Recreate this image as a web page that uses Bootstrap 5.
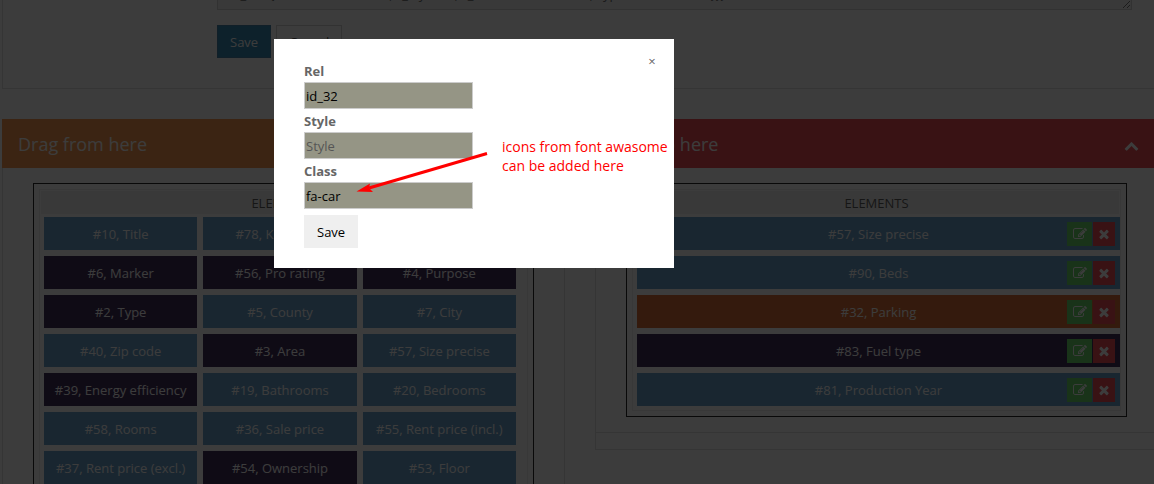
<!DOCTYPE html>
<html lang="en">
<head>
<meta charset="utf-8">
<meta name="viewport" content="width=device-width, initial-scale=1">
<title>Edit element</title>
<link href="https://cdn.jsdelivr.net/npm/bootstrap@5.3.0/dist/css/bootstrap.min.css" rel="stylesheet">
<style>
  body { font: 13px/20px "Open Sans", "Noto Sans", sans-serif; color: #666; background: #fff; overflow: hidden; }
  .page-wrap { padding-left: 2px; margin-right: -4px; }
  .form-panel { border: 1px solid #ddd; border-top: 0; padding: 0 25px 30px 214px; margin-bottom: 30px; }
  .code-area { height: 60px; margin-top: -50px; padding: 33px 6px 0; font-size: 13px; line-height: 20px; border-radius: 0; border-color: #ccc; background: #eee; color: #555; display: block; overflow: hidden; }
  .form-actions { margin-top: 15px; gap: 5px; }
  .btn-flat { font-size: 13px; line-height: 20px; padding: 5px 12px; border-radius: 0; height: 33px; }
  .btn-main { background: #1479ac; border-color: #2a6f9a; color: #fff; }
  .btn-plain { background: #fff; border-color: #ccc; color: #333; }
  .panels { gap: 30px; }
  .drag-panel { flex: 1 1 0; min-width: 0; }
  .panel-title { height: 49px; padding: 0 19px 0 16px; font-size: 18px; color: #fff; }
  .title-orange { background: #fa8833; }
  .title-red { background: #f03038; }
  .title-toggle { border: 0; padding: 3px 0 0; background: none; color: #fff; line-height: 1; }
  .panel-inner { border: 1px solid #ddd; border-top: 0; padding: 15px 30px; }
  .panel-end { border: 1px solid #ddd; border-top: 0; height: 17px; }
  .drop-frame { border: 1px solid #000; padding: 5px; }
  .drop-zone { border: 1px solid #eaeaea; padding: 1px 1px 4px; }
  .zone-name { background: #eee; height: 23px; line-height: 24px; margin-bottom: 3px; text-align: center; color: #444; }
  .items { display: grid; gap: 6px; margin: 0 -1px 0 3px; }
  .items-3 { grid-template-columns: repeat(3, 1fr); margin-right: 10px; }
  .item { height: 33px; line-height: 34px; text-align: center; color: #fff; position: relative; white-space: nowrap; }
  .blue { background: #5191c3; }
  .dark { background: #1f0b3f; }
  .rust { background: #d65815; }
  .tools { position: absolute; right: 5px; top: 5px; gap: 1px; }
  .tool { border: 0; padding: 0; height: 24px; display: flex; align-items: center; justify-content: center; color: #fff; }
  .tool svg, .title-toggle svg { fill: currentColor; display: block; }
  .tool-edit { width: 25px; background: #52d052; }
  .tool-del { width: 22px; background: #f03038; }
  .shade { position: fixed; inset: 0; background: #0b0b0b; opacity: .8; z-index: 10; }
  .popup-layer { position: fixed; inset: 0; z-index: 11; padding: 39px 0 0 274px; }
  .popup-box { position: relative; width: 400px; max-width: 100%; background: #fff; padding: 22px 30px 20px; }
  .popup-box label { display: block; font-weight: 700; line-height: 20px; height: 21px; }
  .popup-box input { display: block; width: 169px; height: 27px; padding: 1px; border: 1px solid #ccc; border-radius: 0; background: #959585; color: #000; margin-bottom: 2px; }
  .popup-box input::placeholder { color: #555; opacity: 1; }
  .btn-save { border: 0; background: #efefef; color: #000; height: 33px; padding: 0 13px; margin-top: 4px; }
  .popup-close { position: absolute; top: 12px; right: 12px; width: 20px; height: 20px; border: 0; padding: 0; background: none; color: #666; font-size: 13px; line-height: 20px; }
  .note-text { position: absolute; left: 228px; top: 98px; color: #f00; font: 14px/19px "Open Sans", sans-serif; white-space: nowrap; }
  .note-arrow { position: absolute; left: 80px; top: 110px; }
</style>
</head>
<body>
<svg width="0" height="0" class="position-absolute" aria-hidden="true">
  <symbol id="ico-edit" viewBox="0 0 1792 1792"><path d="M888 1184l116-116-152-152-116 116v56h96v96h56zm440-720q-16-16-33 1l-350 350q-17 17-1 33t33-1l350-350q17-17 1-33zm80 594v190q0 119-84.5 203.5t-203.5 84.5h-832q-119 0-203.500-84.500t-84.500-203.500v-832q0-119 84.500-203.500t203.500-84.500h832q63 0 117 25 15 7 18 23 3 17-9 29l-49 49q-14 14-32 8-23-6-45-6h-832q-66 0-113 47t-47 113v832q0 66 47 113t113 47h832q66 0 113-47t47-113v-126q0-13 9-22l64-64q15-15 35-7t20 29zm-96-738l288 288-672 672h-288v-288zm444 132l-92 92-288-288 92-92q28-28 68-28t68 28l152 152q28 28 28 68t-28 68z"/></symbol>
  <symbol id="ico-times" viewBox="0 0 1792 1792"><path d="M1490 1322q0 40-28 68l-136 136q-28 28-68 28t-68-28l-294-294-294 294q-28 28-68 28t-68-28l-136-136q-28-28-28-68t28-68l294-294-294-294q-28-28-28-68t28-68l136-136q28-28 68-28t68 28l294 294 294-294q28-28 68-28t68 28l136 136q28 28 28 68t-28 68l-294 294 294 294q28 28 28 68z"/></symbol>
</svg>
<main class="page-wrap">
  <section class="form-panel">
    <textarea class="form-control code-area" aria-label="Widget code" readonly>"id_81":{"direction":"NONE","f_style":"","f_class":"fa-calendar","type":"CHECKBOX"}}}</textarea>
    <div class="form-actions d-flex">
      <button type="button" class="btn btn-flat btn-main">Save</button>
      <button type="button" class="btn btn-flat btn-plain">Cancel</button>
    </div>
  </section>
  <div class="panels d-flex align-items-start">
    <section class="drag-panel">
      <div class="panel-title title-orange d-flex align-items-center">Drag from here</div>
      <div class="panel-inner">
        <div class="drop-frame"><div class="drop-zone">
          <div class="zone-name">ELEMENTS</div>
          <div class="items items-3">
            <div class="item blue">#10, Title</div><div class="item blue">#78, Keywords</div><div class="item blue">#8, Description</div>
            <div class="item dark">#6, Marker</div><div class="item dark">#56, Pro rating</div><div class="item dark">#4, Purpose</div>
            <div class="item dark">#2, Type</div><div class="item blue">#5, County</div><div class="item blue">#7, City</div>
            <div class="item blue">#40, Zip code</div><div class="item dark">#3, Area</div><div class="item blue">#57, Size precise</div>
            <div class="item dark">#39, Energy efficiency</div><div class="item blue">#19, Bathrooms</div><div class="item blue">#20, Bedrooms</div>
            <div class="item blue">#58, Rooms</div><div class="item blue">#36, Sale price</div><div class="item blue">#55, Rent price (incl.)</div>
            <div class="item blue">#37, Rent price (excl.)</div><div class="item dark">#54, Ownership</div><div class="item blue">#53, Floor</div>
          </div>
        </div></div>
      </div>
    </section>
    <section class="drag-panel">
      <div class="panel-title title-red d-flex align-items-center justify-content-between">Drop to here
        <button type="button" class="title-toggle" aria-label="Collapse"><svg width="15" height="15" viewBox="0 0 1792 1792"><path d="M1683 1331l-166 165q-19 19-45 19t-45-19l-531-531-531 531q-19 19-45 19t-45-19l-166-165q-19-19-19-45.500t19-45.500l742-741q19-19 45-19t45 19l742 741q19 19 19 45.500t-19 45.500z"/></svg></button>
      </div>
      <div class="panel-inner">
        <div class="drop-frame"><div class="drop-zone">
          <div class="zone-name">ELEMENTS</div>
          <div class="items">
            <div class="item blue">#57, Size precise<div class="tools d-flex"><button type="button" class="tool tool-edit" aria-label="Edit"><svg width="14" height="14"><use href="#ico-edit"/></svg></button><button type="button" class="tool tool-del" aria-label="Remove"><svg width="14" height="14"><use href="#ico-times"/></svg></button></div></div>
            <div class="item blue">#90, Beds<div class="tools d-flex"><button type="button" class="tool tool-edit" aria-label="Edit"><svg width="14" height="14"><use href="#ico-edit"/></svg></button><button type="button" class="tool tool-del" aria-label="Remove"><svg width="14" height="14"><use href="#ico-times"/></svg></button></div></div>
            <div class="item rust">#32, Parking<div class="tools d-flex"><button type="button" class="tool tool-edit" aria-label="Edit"><svg width="14" height="14"><use href="#ico-edit"/></svg></button><button type="button" class="tool tool-del" aria-label="Remove"><svg width="14" height="14"><use href="#ico-times"/></svg></button></div></div>
            <div class="item dark">#83, Fuel type<div class="tools d-flex"><button type="button" class="tool tool-edit" aria-label="Edit"><svg width="14" height="14"><use href="#ico-edit"/></svg></button><button type="button" class="tool tool-del" aria-label="Remove"><svg width="14" height="14"><use href="#ico-times"/></svg></button></div></div>
            <div class="item blue">#81, Production Year<div class="tools d-flex"><button type="button" class="tool tool-edit" aria-label="Edit"><svg width="14" height="14"><use href="#ico-edit"/></svg></button><button type="button" class="tool tool-del" aria-label="Remove"><svg width="14" height="14"><use href="#ico-times"/></svg></button></div></div>
          </div>
        </div></div>
      </div>
      <div class="panel-end"></div>
    </section>
  </div>
</main>
<div class="shade"></div>
<div class="popup-layer">
  <form class="popup-box">
    <label for="rel">Rel</label><input id="rel" type="text" value="id_32">
    <label for="sty">Style</label><input id="sty" type="text" placeholder="Style">
    <label for="cls">Class</label><input id="cls" type="text" value="fa-car">
    <button type="button" class="btn-save">Save</button>
    <button type="button" class="popup-close" aria-label="Close">×</button>
    <div class="note-text">icons from font awasome<br>can be added here</div>
    <svg class="note-arrow" width="136" height="48" viewBox="0 0 136 48" aria-hidden="true"><path d="M15 39L133 4.500" stroke="#f00" stroke-width="3" fill="none"/><path d="M2.500 42.500L16 34.500L15 39L19 43Z" fill="#f00"/></svg>
  </form>
</div>
<script src="https://cdn.jsdelivr.net/npm/bootstrap@5.3.0/dist/js/bootstrap.bundle.min.js"></script>
</body>
</html>
